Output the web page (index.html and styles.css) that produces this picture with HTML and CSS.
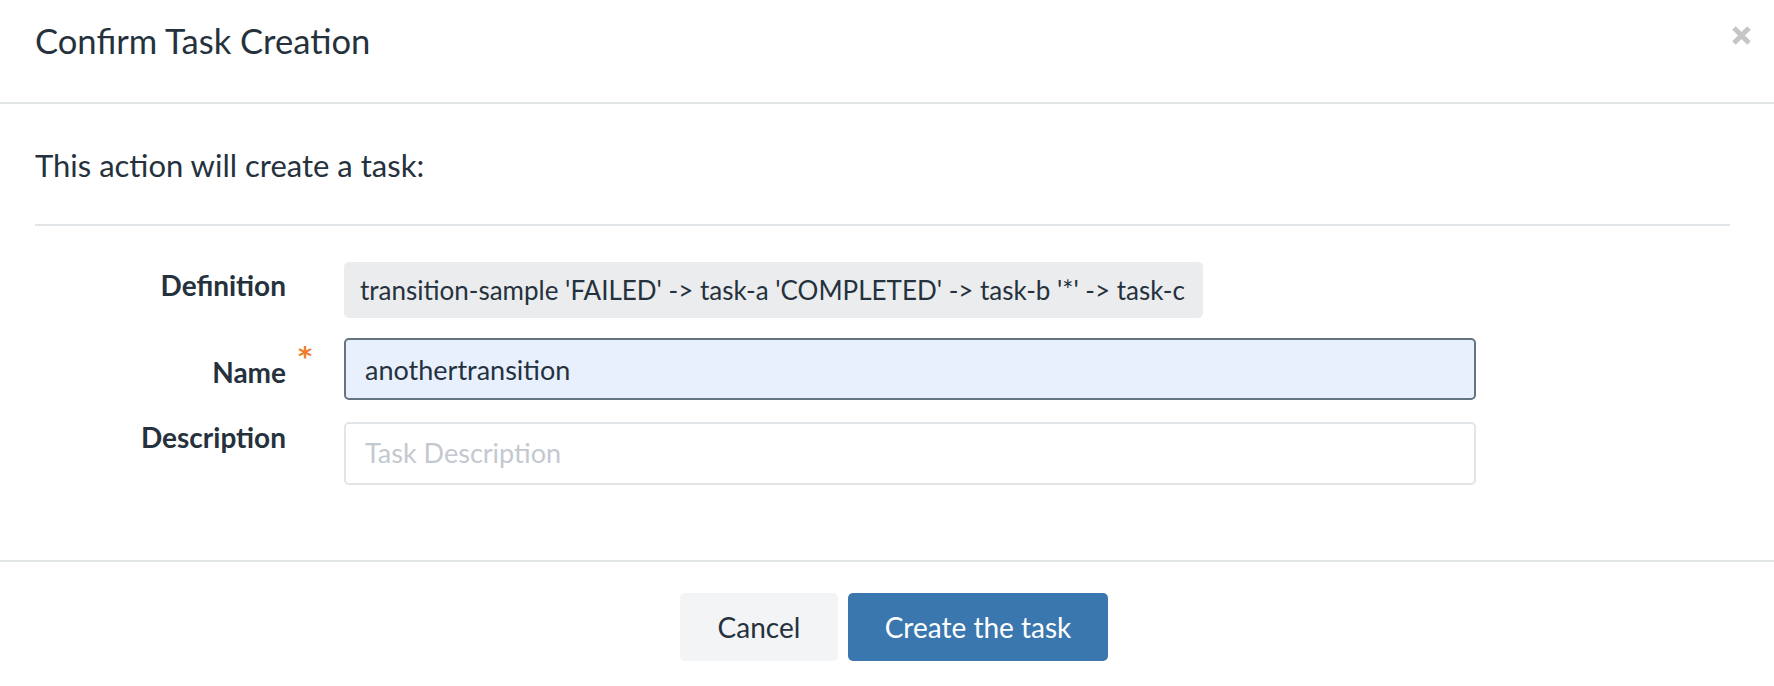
FILE: index.html
```html
<!DOCTYPE html>
<html lang="en">
<head>
<meta charset="utf-8">
<title>Confirm Task Creation</title>
<link rel="stylesheet" href="styles.css">
</head>
<body>
<div class="modal">
  <div class="modal-header">
    <h1 class="modal-title">Confirm Task Creation</h1>
    <button class="close" aria-label="Close">
      <svg width="21" height="21" viewBox="0 0 21 21"><path d="M3 3 L18 18 M18 3 L3 18" stroke="#c6c6c6" stroke-width="5" stroke-linecap="butt"/></svg>
    </button>
  </div>
  <div class="modal-body">
    <p class="intro">This action will create a task:</p>
    <div class="divider"></div>
    <div class="form">
      <div class="row row-def">
        <div class="label">Definition</div>
        <div class="field"><span class="def-box">transition-sample 'FAILED' -&gt; task-a 'COMPLETED' -&gt; task-b '*' -&gt; task-c</span></div>
      </div>
      <div class="row row-name">
        <div class="label"><span class="req-wrap">Name<span class="req">*</span></span></div>
        <div class="field"><input class="input input-active" type="text" value="anothertransition"></div>
      </div>
      <div class="row row-desc">
        <div class="label">Description</div>
        <div class="field"><input class="input" type="text" placeholder="Task Description"></div>
      </div>
    </div>
  </div>
  <div class="modal-footer">
    <button class="btn btn-cancel">Cancel</button>
    <button class="btn btn-primary">Create the task</button>
  </div>
</div>
</body>
</html>
```
FILE: styles.css
```css
* { box-sizing: border-box; }
html, body { margin: 0; padding: 0; background: #ffffff; }
body {
  font-family: "Lato", "Liberation Sans", sans-serif;
  color: #25323d;
  width: 1774px;
  height: 686px;
  overflow: hidden;
}
.modal { width: 1774px; }

.modal-header {
  height: 104px;
  border-bottom: 2px solid #e0e4e4;
  padding: 22px 0 0 35px;
  display: flex;
  align-items: flex-start;
  justify-content: space-between;
}
.modal-title {
  margin: 0;
  font-size: 34.6px;
  font-weight: 400;
  line-height: 38px;
  color: #25323d;
}
.close {
  border: 0;
  background: transparent;
  padding: 0;
  margin: 3px 22px 0 0;
  width: 21px;
  height: 21px;
  display: block;
}
.close svg { display: block; }

.modal-body { padding: 0 44px 0 35px; }
.intro {
  margin: 0;
  padding-top: 44px;
  font-size: 31px;
  line-height: 34px;
}
.divider {
  margin-top: 42px;
  height: 2px;
  background: #e1e5e8;
}
.form {
  padding-top: 36px;
  padding-bottom: 75px;
  display: flex;
  flex-direction: column;
}
.row {
  display: grid;
  grid-template-columns: 251px 1132px;
  column-gap: 58px;
  align-items: start;
}
.row-name { margin-top: 20px; }
.row-desc { margin-top: 22px; }
.label {
  text-align: right;
  font-weight: 700;
  font-size: 28px;
  line-height: 30px;
}
.row-def .label { padding-top: 8px; }
.row-name .label { padding-top: 19px; }
.row-desc .label { padding-top: 0; }
.req-wrap { position: relative; }
.req {
  position: absolute;
  left: 100%;
  top: -13px;
  margin-left: 12px;
  color: #ef7d2a;
  font-family: "DejaVu Sans", sans-serif;
  font-weight: 700;
  font-size: 27px;
}
.def-box {
  display: inline-block;
  height: 56px;
  line-height: 56px;
  padding: 0 18px 0 16px;
  background: #ebecee;
  border-radius: 5px;
  font-size: 26px;
  color: #25323d;
  white-space: nowrap;
}
.input {
  display: block;
  width: 1132px;
  height: 63px;
  border: 2px solid #e1e5e8;
  border-radius: 5px;
  padding: 0 19px 2px;
  font-family: "Lato", "Liberation Sans", sans-serif;
  font-size: 27px;
  color: #25323d;
  background: #ffffff;
  outline: none;
}
.input::placeholder { color: #c3c9cf; }
.input-active {
  height: 62px;
  padding-bottom: 0;
  border-color: #647481;
  background: #e8f0fe;
}

.modal-footer {
  border-top: 2px solid #e1e5e5;
  padding: 31px 0 24px 14px;
  display: flex;
  justify-content: center;
  gap: 10px;
}
.btn {
  height: 68px;
  border: 0;
  border-radius: 5px;
  font-family: "Lato", "Liberation Sans", sans-serif;
  font-size: 28px;
  padding: 0;
  cursor: pointer;
}
.btn-cancel {
  width: 158px;
  background: #f3f4f6;
  color: #25323d;
}
.btn-primary {
  width: 260px;
  background: #3a77ae;
  color: #ffffff;
}
```
